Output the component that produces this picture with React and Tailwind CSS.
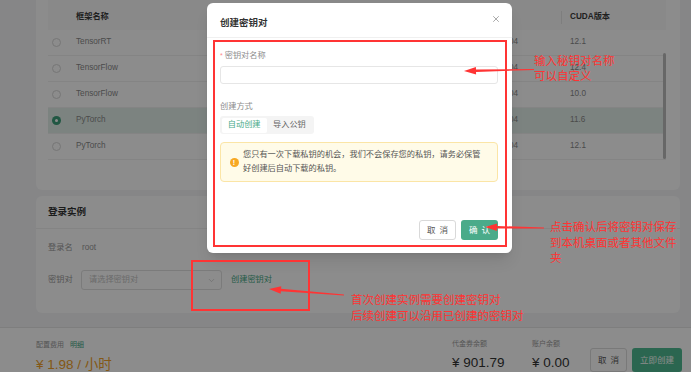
import React from "react";
import { X, ChevronDown } from "lucide-react";

const rows = [
  { name: "TensorRT", os: "Ubuntu 22.04", cuda: "12.1" },
  { name: "TensorFlow", os: "Ubuntu 22.04", cuda: "12.4" },
  { name: "TensorFlow", os: "Ubuntu 20.04", cuda: "10.0" },
  { name: "PyTorch", os: "Ubuntu 22.04", cuda: "11.6", selected: true },
  { name: "PyTorch", os: "Ubuntu 22.04", cuda: "12.1" },
];

// tapered arrow, like the ones a screenshot tool draws
function arrowPoints(tx, ty, px, py) {
  const dx = px - tx;
  const dy = py - ty;
  const len = Math.hypot(dx, dy);
  const ux = dx / len;
  const uy = dy / len;
  const nx = -uy;
  const ny = ux;
  const head = 12;
  const hw = 3.8;
  const tail = 0.4;
  const neck = 1.2;
  const bx = px - ux * head;
  const by = py - uy * head;
  const pts = [
    [tx + nx * tail, ty + ny * tail],
    [bx + nx * neck, by + ny * neck],
    [bx + nx * hw, by + ny * hw],
    [px, py],
    [bx - nx * hw, by - ny * hw],
    [bx - nx * neck, by - ny * neck],
    [tx - nx * tail, ty - ny * tail],
  ];
  return pts.map((p) => p[0].toFixed(1) + "," + p[1].toFixed(1)).join(" ");
}

const Radio = ({ checked }) =>
  checked ? (
    <span className="flex h-[9px] w-[9px] items-center justify-center rounded-full bg-[#3d9f7a]">
      <span className="h-[3px] w-[3px] rounded-full bg-white" />
    </span>
  ) : (
    <span className="h-[9px] w-[9px] rounded-full border border-[#d6d6d6] bg-white" />
  );

const App = () => {
  return (
    <div className="relative h-[372px] w-[691px] overflow-hidden bg-[#f4f5f6] font-['Liberation_Sans','Noto_Sans_CJK_SC',sans-serif] text-[8.2px] text-[#333]">
      {/* 页面内容 */}
      <div className="flex flex-col pl-[36px] pr-[11px]">
        {/* 镜像表格 */}
        <div className="relative rounded-b-[6px] bg-white pb-[30px] pl-[12px] pr-[14px]">
          <div className="flex h-[30px] items-center bg-[#fafafa] pt-[4px] font-bold text-[#3a3a3a]">
            <div className="w-[20px]" />
            <div className="w-[393px] pl-[8px]">框架名称</div>
            <div className="w-[100px] pl-[8px]">系统</div>
            <div className="flex w-[105px] items-center">
              <span className="h-[13px] w-px bg-[#e6e6e6]" />
              <span className="ml-[8px]">CUDA版本</span>
            </div>
          </div>
          {rows.map((r, i) => (
            <div
              key={i}
              className={
                "flex h-[26px] items-center border-b border-[#f0f0f0] text-[#8a8a8a] " +
                (r.selected ? "bg-[#e2efe9]" : "")
              }
            >
              <div className="flex w-[20px] pl-[4px]">
                <Radio checked={r.selected} />
              </div>
              <div className="w-[393px] pl-[8px]">{r.name}</div>
              <div className="w-[100px] pl-[8px]">{r.os}</div>
              <div className="w-[105px] pl-[9px]">{r.cuda}</div>
            </div>
          ))}
          <div className="absolute right-[14px] top-[53px] h-[106px] w-[3px] rounded-full bg-[#bcbcbc]" />
        </div>

        {/* 登录实例 */}
        <div className="mt-[6px] rounded-[6px] bg-white">
          <div className="flex h-[33px] items-center border-b border-[#f0f0f0] px-[12px] text-[9.5px] font-bold text-[#333]">
            登录实例
          </div>
          <div className="px-[12px] pb-[23px] pt-[13px] text-[#999]">
            <div className="flex h-[12px] items-center">
              <span className="w-[34px]">登录名</span>
              <span>root</span>
            </div>
            <div className="mt-[16px] flex items-center">
              <span className="w-[33px]">密钥对</span>
              <div className="flex h-[20px] w-[141px] items-center justify-between rounded-[3px] border border-[#e0e0e0] pl-[7px] pr-[5px]">
                <span className="text-[#c4c4c4]">请选择密钥对</span>
                <ChevronDown size={9} strokeWidth={1.5} color="#bbbbbb" />
              </div>
              <span className="ml-[9px] text-[#45a884]">创建密钥对</span>
            </div>
          </div>
        </div>
      </div>

      {/* 底部费用栏 */}
      <div className="mt-[14px] flex h-[45px] border-t border-[#e6e6e6] bg-white pl-[36px] pr-[9px]">
        <div className="flex flex-col pt-[12px]">
          <div className="text-[7px] leading-[10px] text-[#999]">
            配置费用<span className="ml-[6px] text-[#45a884]">明细</span>
          </div>
          <div className="mt-[7px] text-[13.5px] leading-[16px] text-[#f0a12a]">¥ 1.98 / 小时</div>
        </div>
        <div className="ml-auto flex items-start">
          <div className="w-[80px] pt-[11px]">
            <div className="text-[7px] leading-[10px] text-[#999]">代金券余额</div>
            <div className="mt-[6px] text-[13.5px] leading-[16px] text-[#333]">¥ 901.79</div>
          </div>
          <div className="w-[58px] pt-[11px]">
            <div className="text-[7px] leading-[10px] text-[#999]">账户余额</div>
            <div className="mt-[6px] text-[13.5px] leading-[16px] text-[#333]">¥ 0.00</div>
          </div>
          <div className="mt-[20px] flex gap-[5px] text-[8.5px]">
            <button className="flex h-[24px] w-[37px] items-center justify-center gap-[4px] rounded-[3px] border border-[#dcdcdc] bg-white text-[#555]">
              <span>取</span>
              <span>消</span>
            </button>
            <button className="h-[24px] w-[50px] rounded-[3px] bg-[#4fbb92] text-white">立即创建</button>
          </div>
        </div>
      </div>

      {/* 遮罩 */}
      <div className="absolute inset-0 bg-black/45" />

      {/* 弹窗 */}
      <div className="absolute left-[207px] top-[3px] flex h-[250px] w-[305px] flex-col rounded-[6px] bg-white shadow-lg">
        <div className="flex h-[35px] items-start justify-between border-b border-[#f0f0f0] pl-[13px] pr-[11px]">
          <span className="mt-[14px] text-[9.5px] font-bold leading-[12px] text-[#333]">创建密钥对</span>
          <X className="mt-[11px]" size={10} strokeWidth={1.5} color="#777777" />
        </div>
        <div className="flex flex-col pl-[13px] pr-[14px] pt-[12px]">
          <div className="flex h-[12px] items-center text-[#8c8c8c]">
            <span className="mr-[2px] text-[7px] text-[#ff8a8a]">*</span>
            密钥对名称
          </div>
          <div className="mt-[4px] h-[18px] rounded-[3px] border border-[#e6e6e6]" />
          <div className="mt-[17px] h-[12px] leading-[12px] text-[#8c8c8c]">创建方式</div>
          <div className="mt-[3px] flex h-[18px] w-fit rounded-[3px] bg-[#f4f4f4] p-[1.5px]">
            <span className="flex items-center rounded-[2px] bg-white px-[6.25px] text-[#4aab8a]">自动创建</span>
            <span className="flex items-center px-[6.25px] text-[#666]">导入公钥</span>
          </div>
          <div className="mt-[8px] flex h-[40px] items-center rounded-[4px] border border-[#fbe5a6] bg-[#fffbe8] pl-[8.5px]">
            <span className="flex h-[9px] w-[9px] shrink-0 items-center justify-center rounded-full bg-[#f7a823] text-[7px] font-bold leading-none text-white">
              !
            </span>
            <p className="ml-[4.5px] w-[241px] leading-[14px] text-[#555]">
              您只有一次下载私钥的机会，我们不会保存您的私钥，请务必保管好创建后自动下载的私钥。
            </p>
          </div>
          <div className="mt-[38px] flex justify-end gap-[5px] text-[8.5px]">
            <button className="flex h-[20px] w-[37px] items-center justify-center gap-[4px] rounded-[3px] border border-[#d9d9d9] bg-white text-[#555]">
              <span>取</span>
              <span>消</span>
            </button>
            <button className="flex h-[20px] w-[37px] items-center justify-center gap-[4px] rounded-[3px] bg-[#4aab8a] text-white">
              <span>确</span>
              <span>认</span>
            </button>
          </div>
        </div>
      </div>

      {/* 标注 */}
      <div className="absolute left-[213px] top-[40px] h-[207px] w-[294px] border-[2.5px] border-[#ff3434]" />
      <div className="absolute left-[191px] top-[260px] h-[51px] w-[119px] border-[2.5px] border-[#ff3434]" />
      <svg className="pointer-events-none absolute inset-0" width="691" height="372">
        <polygon points={arrowPoints(534, 69.5, 464, 71)} fill="#ff3434" />
        <polygon points={arrowPoints(544, 228, 485, 227)} fill="#ff3434" />
        <polygon points={arrowPoints(344, 295, 269, 289)} fill="#ff3434" />
      </svg>
      <div className="absolute left-[534px] top-[53px] font-['Noto_Sans_CJK_SC',sans-serif] text-[11.5px] leading-[15px] text-[#ff3333]">
        <div>输入秘钥对名称</div>
        <div>可以自定义</div>
      </div>
      <div className="absolute left-[550px] top-[219px] w-[128px] font-['Noto_Sans_CJK_SC',sans-serif] text-[11.5px] leading-[15.5px] text-[#ff3333]">
        点击确认后将密钥对保存到本机桌面或者其他文件夹
      </div>
      <div className="absolute left-[351px] top-[292px] font-['Noto_Sans_CJK_SC',sans-serif] text-[11.5px] leading-[15.5px] text-[#ff3333]">
        <div>首次创建实例需要创建密钥对</div>
        <div>后续创建可以沿用已创建的密钥对</div>
      </div>
    </div>
  );
};

export default App;
